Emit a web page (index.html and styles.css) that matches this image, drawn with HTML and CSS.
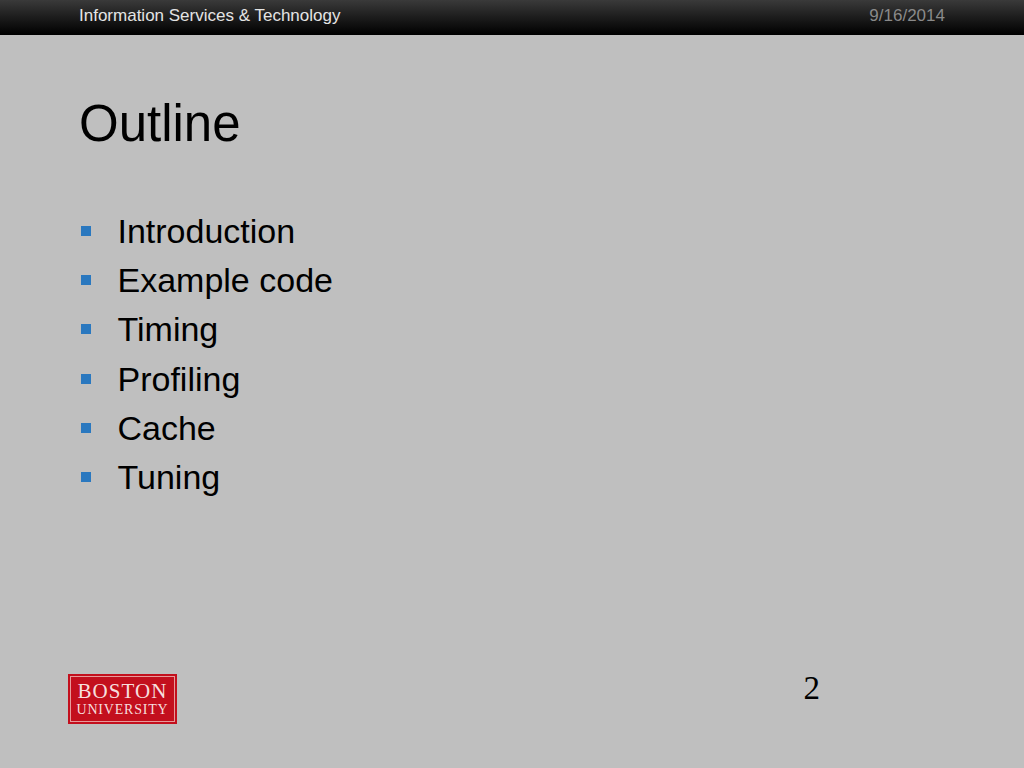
FILE: index.html
```html
<!DOCTYPE html>
<html lang="en">
<head>
<meta charset="utf-8">
<title>Outline</title>
<link rel="stylesheet" href="styles.css">
</head>
<body>
<div class="slide">
  <header class="topbar">
    <span class="org">Information Services &amp; Technology</span>
    <span class="date">9/16/2014</span>
  </header>
  <main class="content">
    <h1 class="title">Outline</h1>
    <ul class="items">
      <li class="item">Introduction</li>
      <li class="item">Example code</li>
      <li class="item">Timing</li>
      <li class="item">Profiling</li>
      <li class="item">Cache</li>
      <li class="item">Tuning</li>
    </ul>
  </main>
  <footer class="foot">
    <div class="logo">
      <div class="logo-inner">
        <span class="logo-top">BOSTON</span>
        <span class="logo-bottom">UNIVERSITY</span>
      </div>
    </div>
    <span class="page">2</span>
  </footer>
</div>
</body>
</html>
```
FILE: styles.css
```css
html, body { margin: 0; padding: 0; }
body { background: #bfbfbf; font-family: "Liberation Sans", Arial, sans-serif; }
.slide { width: 1024px; height: 768px; display: flex; flex-direction: column; overflow: hidden; background: #bfbfbf; }
.topbar {
  height: 35px; box-sizing: border-box; flex: none;
  display: flex; justify-content: space-between; align-items: center;
  padding: 0 79px 4px 79px;
  background: linear-gradient(#3a3a3a 0, #1c1c1c 50%, #050505 90%, #000 100%);
  font-size: 17px;
}
.org { color: #e4e4e4; }
.date { color: #8a8a8a; }
.content { flex: 1; padding: 0 79px; }
.title { margin: 59px 0 0; font-size: 51px; line-height: 60px; font-weight: 400; color: #000; }
.items { list-style: none; margin: 53px 0 0; padding: 0; }
.item { position: relative; height: 49.2px; line-height: 49.2px; padding-left: 38.5px; font-size: 34px; color: #000; }
.item::before { content: ""; position: absolute; left: 2px; top: 19px; width: 10px; height: 10px; background: #2a78bf; }
.foot { flex: none; height: 94px; box-sizing: border-box; padding: 0 204px 0 68px; display: flex; justify-content: space-between; align-items: flex-start; }
.logo { width: 109px; height: 50px; box-sizing: border-box; background: #c30f1d; padding: 2px; }
.logo-inner { height: 100%; box-sizing: border-box; border: 1px solid #e79a9a; display: flex; flex-direction: column; align-items: center; justify-content: center; gap: 2px; padding-bottom: 1px; font-family: "Liberation Serif", serif; color: #f6dede; }
.logo-top { font-size: 21px; line-height: 20px; letter-spacing: 1.1px; }
.logo-bottom { font-size: 14px; line-height: 13px; letter-spacing: 0.8px; }
.page { font-family: "Liberation Serif", serif; font-size: 33px; line-height: 33px; margin-top: -2px; color: #000; }
```
